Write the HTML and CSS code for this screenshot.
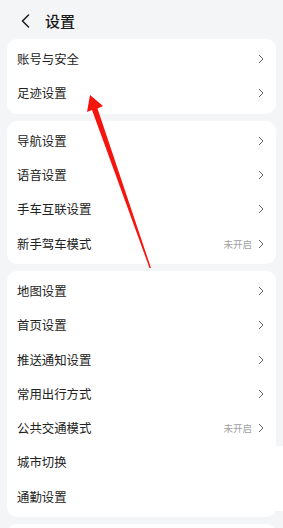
FILE: index.html
```html
<!DOCTYPE html>
<html lang="zh">
<head>
<meta charset="utf-8">
<link rel="stylesheet" href="styles.css">
</head>
<body>
<div class="page">
  <header class="header">
    <svg class="back" width="12" height="14" viewBox="0 0 12 14"><path d="M8.5 1 L2.5 7 L8.5 13" fill="none" stroke="#222" stroke-width="1.6" stroke-linecap="round" stroke-linejoin="round"/></svg>
    <h1 class="title">设置</h1>
  </header>

  <section class="card">
    <div class="row"><span class="label">账号与安全</span><span class="right"><svg class="chev" width="6" height="10" viewBox="0 0 6 10"><path d="M1 1 L5 5 L1 9" fill="none" stroke="#666" stroke-width="1"/></svg></span></div>
    <div class="row"><span class="label">足迹设置</span><span class="right"><svg class="chev" width="6" height="10" viewBox="0 0 6 10"><path d="M1 1 L5 5 L1 9" fill="none" stroke="#666" stroke-width="1"/></svg></span></div>
  </section>

  <section class="card">
    <div class="row"><span class="label">导航设置</span><span class="right"><svg class="chev" width="6" height="10" viewBox="0 0 6 10"><path d="M1 1 L5 5 L1 9" fill="none" stroke="#666" stroke-width="1"/></svg></span></div>
    <div class="row"><span class="label">语音设置</span><span class="right"><svg class="chev" width="6" height="10" viewBox="0 0 6 10"><path d="M1 1 L5 5 L1 9" fill="none" stroke="#666" stroke-width="1"/></svg></span></div>
    <div class="row"><span class="label">手车互联设置</span><span class="right"><svg class="chev" width="6" height="10" viewBox="0 0 6 10"><path d="M1 1 L5 5 L1 9" fill="none" stroke="#666" stroke-width="1"/></svg></span></div>
    <div class="row"><span class="label">新手驾车模式</span><span class="right"><span class="value">未开启</span><svg class="chev" width="6" height="10" viewBox="0 0 6 10"><path d="M1 1 L5 5 L1 9" fill="none" stroke="#666" stroke-width="1"/></svg></span></div>
  </section>

  <section class="card card-last">
    <div class="row"><span class="label">地图设置</span><span class="right"><svg class="chev" width="6" height="10" viewBox="0 0 6 10"><path d="M1 1 L5 5 L1 9" fill="none" stroke="#666" stroke-width="1"/></svg></span></div>
    <div class="row"><span class="label">首页设置</span><span class="right"><svg class="chev" width="6" height="10" viewBox="0 0 6 10"><path d="M1 1 L5 5 L1 9" fill="none" stroke="#666" stroke-width="1"/></svg></span></div>
    <div class="row"><span class="label">推送通知设置</span><span class="right"><svg class="chev" width="6" height="10" viewBox="0 0 6 10"><path d="M1 1 L5 5 L1 9" fill="none" stroke="#666" stroke-width="1"/></svg></span></div>
    <div class="row"><span class="label">常用出行方式</span><span class="right"><svg class="chev" width="6" height="10" viewBox="0 0 6 10"><path d="M1 1 L5 5 L1 9" fill="none" stroke="#666" stroke-width="1"/></svg></span></div>
    <div class="row"><span class="label">公共交通模式</span><span class="right"><span class="value">未开启</span><svg class="chev" width="6" height="10" viewBox="0 0 6 10"><path d="M1 1 L5 5 L1 9" fill="none" stroke="#666" stroke-width="1"/></svg></span></div>
    <div class="row"><span class="label">城市切换</span></div>
    <div class="row"><span class="label">通勤设置</span></div>
  </section>

  <section class="card card-end"></section>

  <svg class="arrow" width="283" height="528" viewBox="0 0 283 528">
    <polygon points="90,95 103,106 97.5,108.5 151,268 149.5,268 92,110 87,112" fill="#f5150f"/>
  </svg>
</div>
</body>
</html>
```

FILE: styles.css
```css
html, body {
  margin: 0;
  padding: 0;
  background: #f4f5f7;
}
body {
  font-family: "Noto Sans CJK SC", "Noto Sans", sans-serif;
  color: #222;
}
.page {
  position: relative;
  width: 283px;
  height: 528px;
  overflow: hidden;
  padding: 0 7px;
  box-sizing: border-box;
  display: flex;
  flex-direction: column;
  gap: 7px;
}
.header {
  height: 39px;
  flex-shrink: 0;
  display: flex;
  align-items: center;
  margin-bottom: -7px;
  padding-left: 13px;
  box-sizing: border-box;
}
.back {
  display: block;
  margin-top: 2px;
}
.title {
  margin: 2px 0 0 13px;
  font-size: 15px;
  font-weight: 500;
  line-height: 20px;
  color: #1a1a1a;
}
.card {
  background: #fff;
  border-radius: 10px;
  padding: 3px 0;
  flex-shrink: 0;
}
.card-end {
  min-height: 30px;
}
.card-last {
  position: relative;
}
.card-last::after {
  content: "";
  position: absolute;
  right: -7px;
  top: 175px;
  width: 12px;
  height: 65px;
  background: #fff;
}
.row {
  height: 34.3px;
  display: flex;
  align-items: center;
  justify-content: space-between;
  padding: 0 12px 0 10px;
}
.label {
  font-size: 12.4px;
  line-height: 16px;
  color: #222;
}
.right {
  display: flex;
  align-items: center;
  gap: 6px;
}
.value {
  font-size: 9.5px;
  color: #a0a0a0;
  line-height: 12px;
}
.chev {
  display: block;
}
.arrow {
  position: absolute;
  left: 0;
  top: 0;
  pointer-events: none;
}
```
